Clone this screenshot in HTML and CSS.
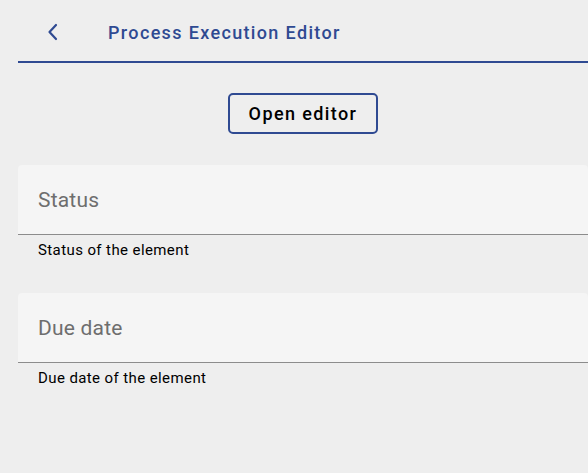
FILE: index.html
```html
<!DOCTYPE html>
<html>
<head>
<meta charset="utf-8">
<link rel="stylesheet" href="styles.css">
</head>
<body>
<div class="page">
  <header class="topbar">
    <button class="back" aria-label="Back">
      <svg width="12" height="18" viewBox="0 0 12 18"><path d="M9 2 L2.5 9 L9 16" fill="none" stroke="#2f4a92" stroke-width="2.2" stroke-linecap="round" stroke-linejoin="round"/></svg>
    </button>
    <h1 class="title">Process Execution Editor</h1>
  </header>
  <div class="actions">
    <button class="open-btn">Open editor</button>
  </div>
  <div class="field">
    <div class="field-box"><span class="label">Status</span></div>
    <div class="hint">Status of the element</div>
  </div>
  <div class="field">
    <div class="field-box"><span class="label">Due date</span></div>
    <div class="hint">Due date of the element</div>
  </div>
</div>
</body>
</html>
```
FILE: styles.css
```css
html, body {
  margin: 0;
  padding: 0;
  background: #eeeeee;
  font-family: Roboto, "Liberation Sans", sans-serif;
}
.page {
  padding-left: 18px;
}
.topbar {
  display: flex;
  align-items: center;
  height: 61px;
  border-bottom: 2px solid #2f4a92;
  box-sizing: content-box;
}
.back {
  background: none;
  border: 0;
  padding: 0;
  margin-left: 29px;
  width: 12px;
  height: 18px;
  display: flex;
  margin-top: 3px;
}
.title {
  margin: 3px 0 0 49px;
  font-size: 18px;
  font-weight: 500;
  letter-spacing: 1.35px;
  color: #2f4a92;
}
.actions {
  display: flex;
  justify-content: center;
  padding-top: 30px;
  margin-left: -18px;
}
.open-btn {
  width: 150px;
  height: 41px;
  border: 2px solid #2f4a92;
  border-radius: 5px;
  background: transparent;
  font-family: Roboto, "Liberation Sans", sans-serif;
  font-size: 18px;
  font-weight: 500;
  letter-spacing: 1.4px;
  color: #000;
  padding: 0;
  margin-left: 18px;
}
.field {
  margin-top: 31px;
}
.field + .field {
  margin-top: 33px;
}
.field-box {
  height: 69px;
  background: #f5f5f5;
  border-radius: 4px 4px 0 0;
  border-bottom: 1px solid #8c8c8c;
  display: flex;
  align-items: center;
  padding-left: 20px;
}
.label {
  font-size: 21px;
  color: #6e6e6e;
  letter-spacing: 0.2px;
  margin-top: 1px;
}
.hint {
  padding-left: 20px;
  padding-top: 6px;
  font-size: 15px;
  letter-spacing: 0.4px;
  color: #000;
  line-height: 19px;
}
```
